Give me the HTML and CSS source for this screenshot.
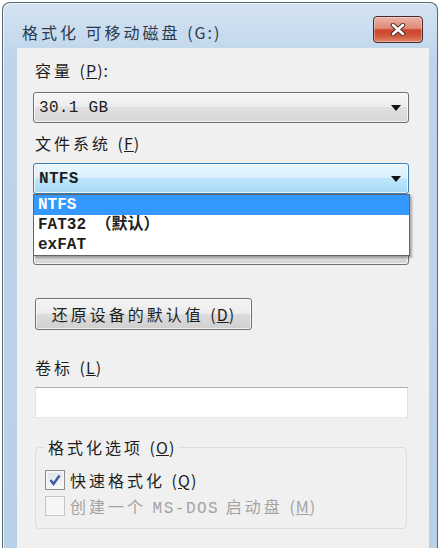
FILE: index.html
```html
<!DOCTYPE html>
<html lang="zh-CN">
<head>
    <meta charset="UTF-8">
    <title>格式化 可移动磁盘 (G:)</title>
    <link rel="stylesheet" href="styles.css">
</head>
<body>
    <div class="window">
        <div class="titlebar">
            <span class="title">格式化 可移动磁盘 <span class="key">(G:)</span></span>
            <button class="close">
                <svg width="16" height="13" viewBox="0 0 16 13">
                    <path d="M3 2 L13 11 M13 2 L3 11" stroke="#4a2a28" stroke-width="4.5" stroke-linecap="round"/>
                    <path d="M3 2 L13 11 M13 2 L3 11" stroke="#ffffff" stroke-width="2.6" stroke-linecap="round"/>
                </svg>
            </button>
        </div>

        <div class="client">
            <div class="label">容量 <span class="key">(<u>P</u>):</span></div>
            <div class="combo">
                <div class="select"><span class="mono">30.1 GB</span><span class="arrow"></span></div>
            </div>

            <div class="label">文件系统 <span class="key">(<u>F</u>)</span></div>
            <div class="combo">
                <div class="select focused"><span class="mono bold">NTFS</span><span class="arrow"></span></div>
                <!-- open list of the file system box -->
                <ul class="dropdown">
                    <li class="selected">NTFS</li>
                    <li>FAT32 （默认）</li>
                    <li>exFAT</li>
                </ul>
            </div>

            <!-- allocation size row, hidden under the open list -->
            <div class="label"></div>
            <div class="combo">
                <div class="select"><span></span><span class="arrow"></span></div>
            </div>

            <button class="btn">还原设备的默认值 <span class="key">(<u>D</u>)</span></button>

            <div class="label label-gap">卷标 <span class="key">(<u>L</u>)</span></div>
            <div class="input"></div>

            <fieldset class="group">
                <legend>格式化选项 <span class="key">(<u>O</u>)</span></legend>
                <label class="check">
                    <span class="box">
                        <svg width="14" height="14" viewBox="0 0 14 14">
                            <path d="M2.5 7 L5.5 11 L11.5 2.5" fill="none" stroke="#3d5a96" stroke-width="2.4"/>
                        </svg>
                    </span>
                    <span>快速格式化 <span class="key">(<u>Q</u>)</span></span>
                </label>
                <label class="check disabled">
                    <span class="box"></span>
                    <span>创建一个 <span class="mono dos">MS-DOS</span> 启动盘 <span class="key">(<u>M</u>)</span></span>
                </label>
            </fieldset>
        </div>
    </div>
</body>
</html>
```

FILE: styles.css
```css
body {
    margin: 0;
    background-color: #ffffff;
    font-family: "Noto Sans CJK SC", "Liberation Sans", sans-serif;
    font-size: 16px;
    color: #1e1e1e;
}
.window {
    margin: 2px 2px 0;
    height: 546px;
    box-sizing: border-box;
    border: 1px solid #56687a;
    border-bottom: none;
    border-radius: 8px 8px 0 0;
    background: linear-gradient(to bottom, #d4e3f2, #bed4eb 60px, #b9d0e9);
    box-shadow: inset 1px 1px 0 #eef4fa;
    padding: 0 8px 0 14px;
    display: flex;
    flex-direction: column;
}
.titlebar {
    height: 45px;
    box-sizing: border-box;
    padding: 13px 0 0 5px;
    display: flex;
    justify-content: space-between;
    align-items: flex-start;
}
.title {
    line-height: 27px;
    padding-top: 3px;
    letter-spacing: 3px;
    color: #2c3a4b;
}
.title .key {
    letter-spacing: 2px;
}
.key {
    letter-spacing: 1px;
}
.close {
    width: 50px;
    height: 27px;
    margin-right: 6px;
    padding: 0;
    border: 1px solid #4a2a2e;
    border-radius: 4px;
    background: linear-gradient(to bottom, #ecb4a6, #df8a76 45%, #cb472c 52%, #d0553a 75%, #e5866a);
    box-shadow: inset 0 0 0 1px rgba(255, 255, 255, 0.35);
    display: flex;
    align-items: center;
    justify-content: center;
}
.client {
    flex: 1;
    background-color: #f0f0f0;
    padding: 11px 21px 0 18px;
}
.label {
    height: 22px;
    line-height: 22px;
    letter-spacing: 3px;
    margin-top: 9px;
}
.label:first-child {
    margin-top: 0;
}
.label-gap {
    margin-top: 26px;
}
.combo {
    position: relative;
    margin: 9px -1px 0 -2px;
}
.combo:nth-child(2) {
    margin-top: 11px;
}
.select {
    height: 31px;
    box-sizing: border-box;
    border: 1px solid #707070;
    border-radius: 3px;
    background: linear-gradient(to bottom, #f7f7f7, #ececec 50%, #e1e1e1 50%, #d6d6d6);
    box-shadow: inset 0 0 0 1px rgba(255, 255, 255, 0.7);
    padding: 0 7px 0 5px;
    display: flex;
    align-items: center;
    justify-content: space-between;
}
.select.focused {
    border-color: #3c7fb1;
    background: linear-gradient(to bottom, #eaf6fd, #d9f0fc 50%, #bee6fd 50%, #a7d9f5);
}
.arrow {
    width: 0;
    height: 0;
    border-left: 5px solid transparent;
    border-right: 5px solid transparent;
    border-top: 6px solid #111111;
}
.mono {
    font-family: "Liberation Mono", "Noto Sans CJK SC", monospace;
    font-size: 16px;
    letter-spacing: 0.3px;
}
.bold {
    font-weight: bold;
}
.dropdown {
    position: absolute;
    top: 31px;
    left: 0;
    right: -1px;
    margin: 0;
    padding: 0;
    list-style: none;
    background-color: #ffffff;
    border: 1px solid #646464;
    box-shadow: 2px 2px 2px rgba(0, 0, 0, 0.3);
    font-family: "Liberation Mono", "Noto Sans CJK SC", monospace;
    font-weight: bold;
    z-index: 2;
}
.dropdown li {
    height: 20px;
    line-height: 20px;
    padding-left: 4px;
}
.dropdown li.selected {
    background-color: #3399ff;
    color: #ffffff;
}
.btn {
    display: block;
    width: 217px;
    height: 32px;
    margin-top: 33px;
    padding: 0;
    border: 1px solid #707070;
    border-radius: 3px;
    background: linear-gradient(to bottom, #f4f4f4, #ececec 50%, #dddddd 50%, #cfcfcf);
    box-shadow: inset 0 0 0 1px rgba(255, 255, 255, 0.7);
    font-family: inherit;
    font-size: 16px;
    letter-spacing: 3px;
    color: #1e1e1e;
}
.input {
    height: 31px;
    box-sizing: border-box;
    margin-top: 9px;
    border: 1px solid;
    border-color: #abadb3 #dbdfe6 #e3e9ef #e2e3ea;
    background-color: #ffffff;
}
.group {
    margin: 18px 1px 0 0;
    padding: 9px;
    border: 1px solid #d5dfe5;
    border-radius: 4px;
    min-width: 0;
}
.group legend {
    padding: 0 3px;
    line-height: 22px;
    letter-spacing: 3px;
}
.check {
    height: 26px;
    display: flex;
    align-items: center;
    gap: 5px;
    letter-spacing: 3px;
}
.box {
    width: 20px;
    height: 20px;
    box-sizing: border-box;
    border: 1px solid #8e8f8f;
    background: linear-gradient(to bottom, #dfe3ea, #f6f8fb);
    box-shadow: inset 0 0 0 2px #f4f4f4;
    display: flex;
    align-items: center;
    justify-content: center;
}
.check.disabled {
    color: #a3a3a3;
}
.check.disabled .box {
    border-color: #c6c6c6;
    background: #f6f6f6;
    box-shadow: none;
}
.dos {
    letter-spacing: 1.5px;
}
```
